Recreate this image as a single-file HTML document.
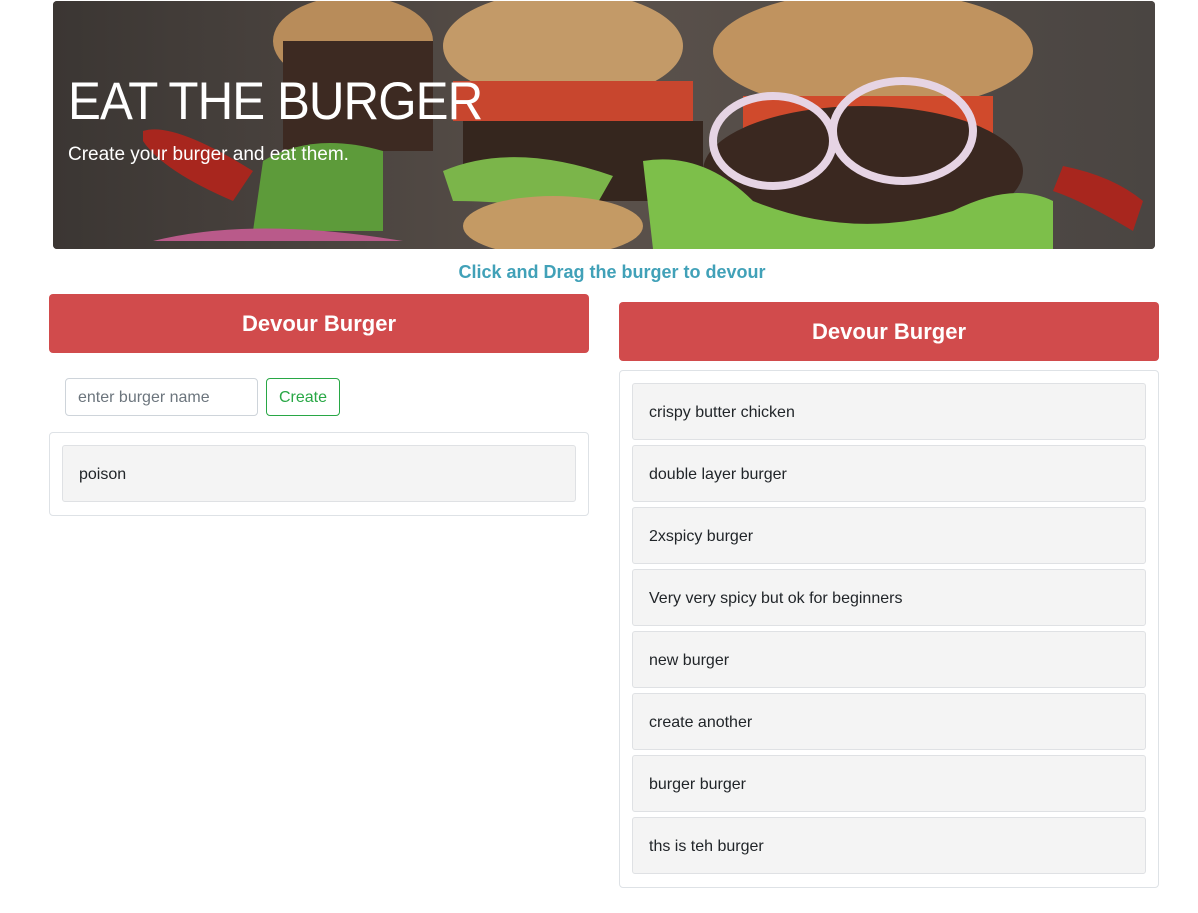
<!DOCTYPE html>
<html><head><style>
*{box-sizing:border-box;margin:0;padding:0}
body{width:1198px;height:913px;background:#fff;font-family:"Liberation Sans",sans-serif;position:relative;overflow:hidden;color:#212529}
.abs{position:absolute}
.hero{left:53px;top:1px;width:1102px;height:248px;border-radius:4px;overflow:hidden;background:#4a4441}
.red{background:#d14b4c;color:#fff;font-weight:bold;font-size:22px;text-align:center;border-radius:4px;line-height:59px;height:59px;width:540px}
.card{border:1px solid #dee2e6;border-radius:4px;background:#fff}
.item{position:absolute;left:12px;width:514px;height:57px;background:#f4f4f4;border:1px solid #dfe1e4;border-radius:3px;padding-left:16px;line-height:57px;font-size:16px;color:#212529}
</style></head><body>
<div class="abs hero">
<svg width="1102" height="248" viewBox="0 0 1102 248">
<defs><linearGradient id="bg" x1="0" x2="1"><stop offset="0" stop-color="#3b3633"/><stop offset=".5" stop-color="#5a514b"/><stop offset="1" stop-color="#4a4542"/></linearGradient></defs>
<rect width="1102" height="248" fill="url(#bg)"/>
<path d="M90 130 Q120 120 200 170 L180 200 Q110 170 90 140Z" fill="#a8261e"/>
<path d="M1010 165 Q1060 175 1090 200 L1080 230 Q1030 200 1000 190Z" fill="#a8261e"/>
<ellipse cx="300" cy="40" rx="80" ry="45" fill="#b88c5a"/>
<rect x="230" y="40" width="150" height="110" fill="#3d2a22"/>
<path d="M210 160 Q260 130 330 150 L330 230 L200 230Z" fill="#5d9b3a"/>
<ellipse cx="510" cy="45" rx="120" ry="55" fill="#c39a68"/>
<rect x="400" y="80" width="240" height="40" fill="#c8462e"/>
<rect x="410" y="120" width="240" height="80" fill="#35261e"/>
<path d="M390 170 Q460 140 560 175 L540 210 Q450 200 400 200Z" fill="#7bb54a"/>
<ellipse cx="500" cy="225" rx="90" ry="30" fill="#c49a64"/>
<ellipse cx="820" cy="50" rx="160" ry="60" fill="#c0935f"/>
<rect x="690" y="95" width="250" height="50" fill="#d04a2c"/>
<ellipse cx="810" cy="170" rx="160" ry="65" fill="#3a2820"/>
<ellipse cx="720" cy="140" rx="60" ry="45" fill="none" stroke="#e6d4e4" stroke-width="8"/>
<ellipse cx="850" cy="130" rx="70" ry="50" fill="none" stroke="#e6d4e4" stroke-width="8"/>
<path d="M590 160 Q650 150 700 200 Q800 240 900 210 Q960 180 1000 200 L1000 248 L600 248Z" fill="#7dbf4a"/>
<path d="M100 240 Q200 215 350 240Z" fill="#b95a8a"/>
</svg>
<div class="abs" style="left:15px;top:70px;color:#fff;font-size:53px;font-weight:300;letter-spacing:-1px;transform:scaleX(0.93);transform-origin:0 0;white-space:nowrap">EAT THE BURGER</div>
<div class="abs" style="left:15px;top:143px;color:#fff;font-size:19px;white-space:nowrap">Create your burger and eat them.</div>
</div>
<div class="abs" style="left:0;width:1224px;top:262px;text-align:center;color:#41a1b8;font-size:18px;font-weight:bold">Click and Drag the burger to devour</div>
<div class="abs red" style="left:49px;top:294px">Devour Burger</div>
<div class="abs" style="left:65px;top:378px;width:193px;height:38px;border:1px solid #ced4da;border-radius:4px;padding-left:12px;line-height:38px;font-size:16px;color:#6c757d">enter burger name</div>
<div class="abs" style="left:266px;top:378px;width:74px;height:38px;border:1px solid #28a745;border-radius:4px;text-align:center;line-height:38px;font-size:16px;color:#28a745">Create</div>
<div class="abs card" style="left:49px;top:432px;width:540px;height:84px">
<div class="item" style="top:12px">poison</div>
</div>
<div class="abs red" style="left:619px;top:302px">Devour Burger</div>
<div class="abs card" style="left:619px;top:370px;width:540px;height:518px">
<div class="item" style="top:12px">crispy butter chicken</div>
<div class="item" style="top:74px">double layer burger</div>
<div class="item" style="top:136px">2xspicy burger</div>
<div class="item" style="top:198px">Very very spicy but ok for beginners</div>
<div class="item" style="top:260px">new burger</div>
<div class="item" style="top:322px">create another</div>
<div class="item" style="top:384px">burger burger</div>
<div class="item" style="top:446px">ths is teh burger</div>
</div>
</body></html>
